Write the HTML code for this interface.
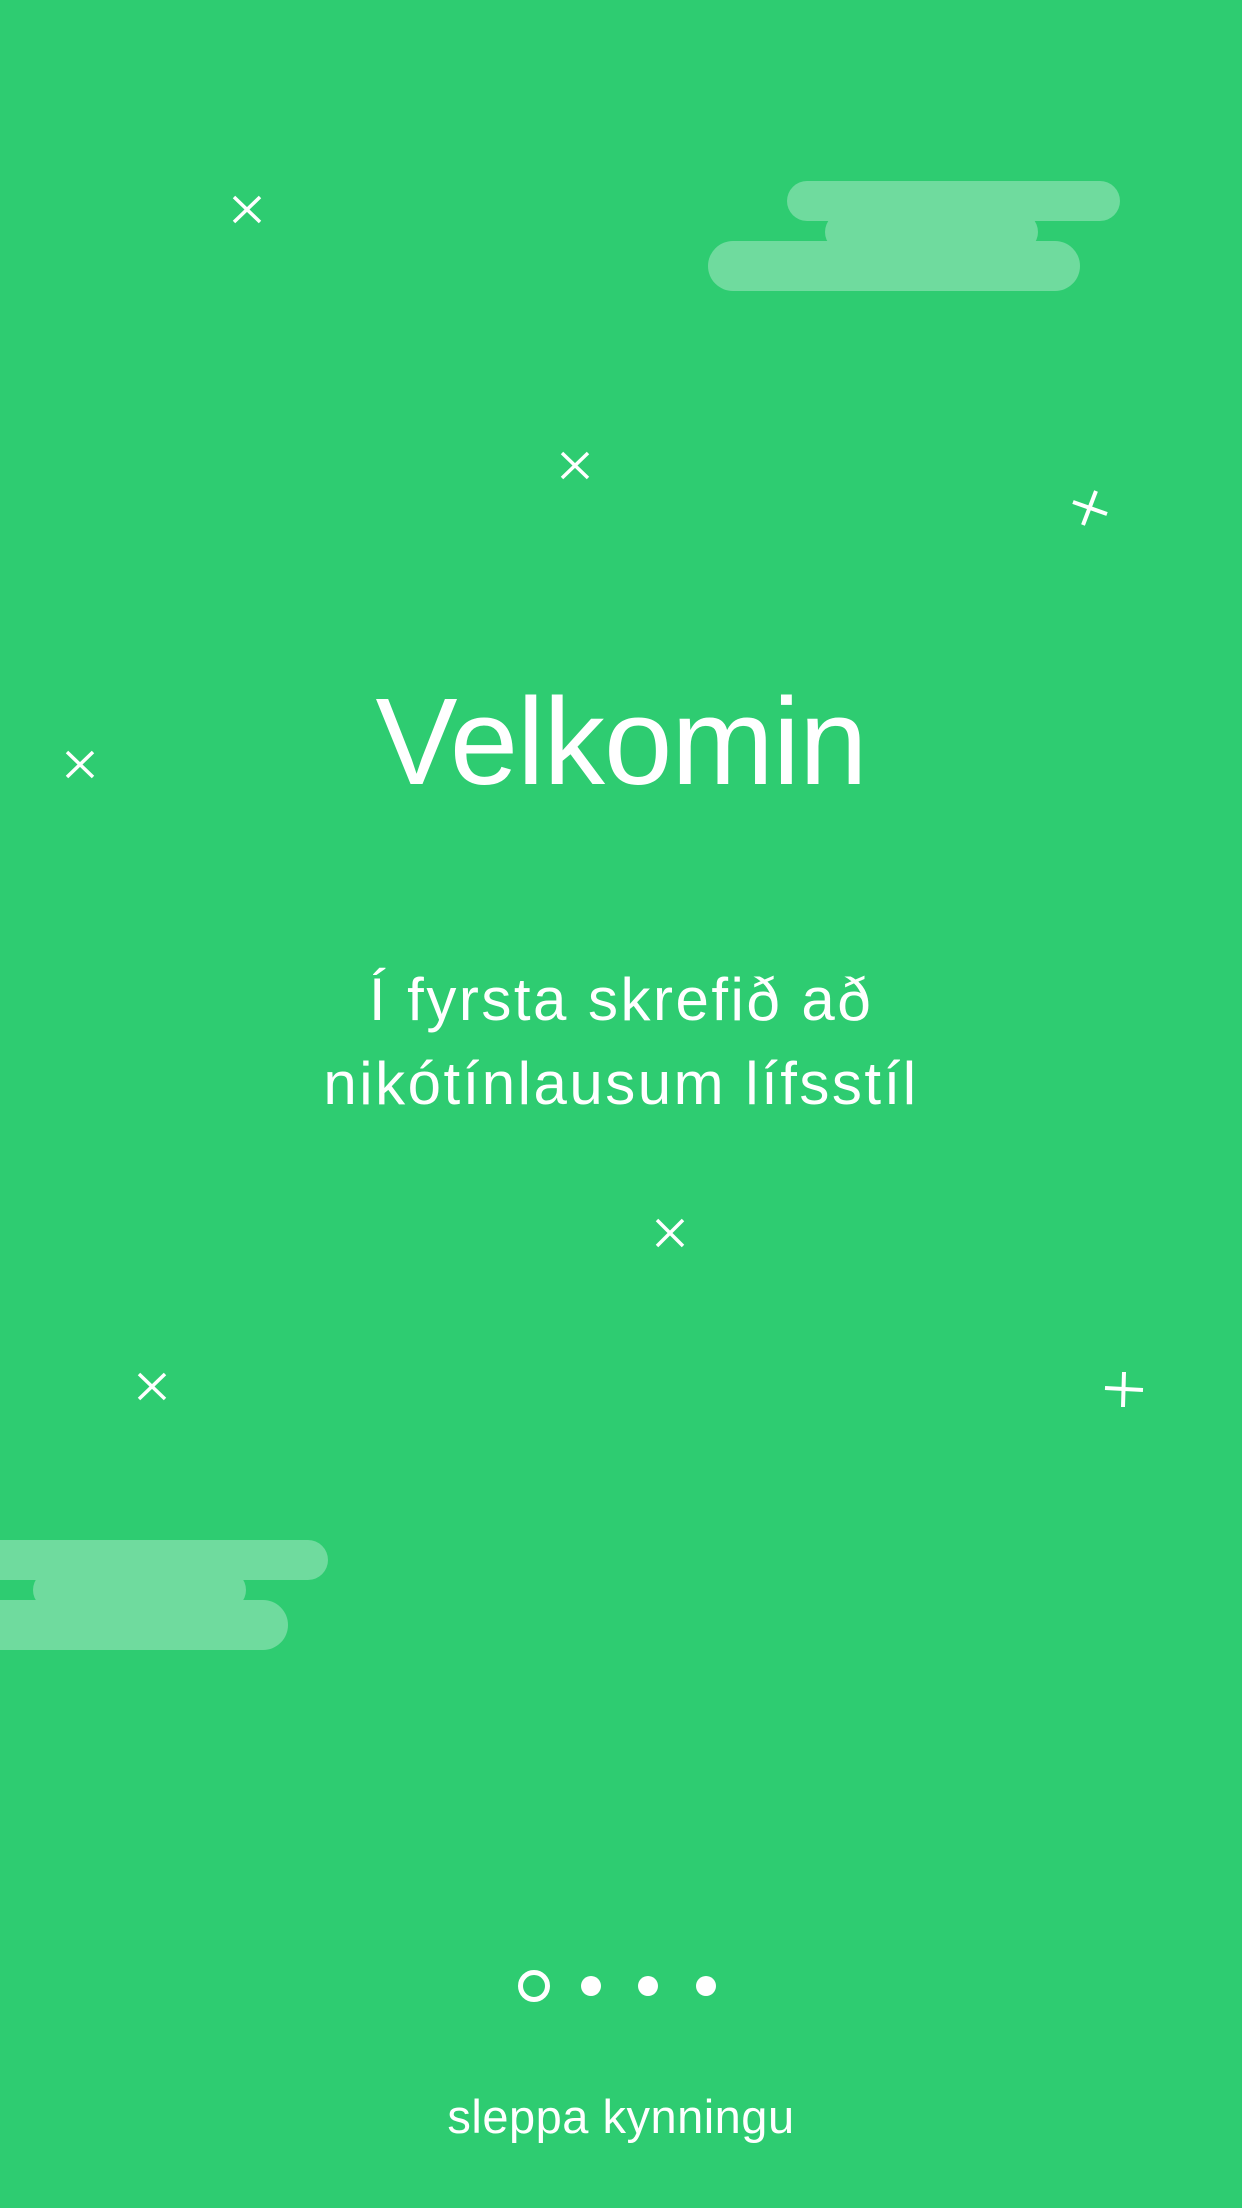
<!DOCTYPE html>
<html><head><meta charset="utf-8"><style>
html,body{margin:0;padding:0}
body{width:1242px;height:2208px;background:#2ecc71;position:relative;overflow:hidden;font-family:"Liberation Sans",sans-serif;color:#fff}
.p{position:absolute;background:#6fdb9e}
.t{position:absolute;left:0;width:1242px;text-align:center;white-space:nowrap}
</style></head><body>
<div class="p" style="left:825px;top:212px;width:213px;height:40px;border-radius:20px"></div>
<div class="p" style="left:787px;top:181px;width:333px;height:40px;border-radius:20px"></div>
<div class="p" style="left:708px;top:241px;width:372px;height:50px;border-radius:25px"></div>
<div class="p" style="left:33px;top:1570px;width:213px;height:40px;border-radius:20px"></div>
<div class="p" style="left:-20px;top:1540px;width:348px;height:40px;border-radius:20px"></div>
<div class="p" style="left:-30px;top:1600px;width:318px;height:50px;border-radius:25px"></div>
<svg width="1242" height="2208" style="position:absolute;left:0;top:0" stroke="#fff" stroke-width="3.5" fill="none">
<path d="M234 197L260 222M260 197L234 222"/>
<path d="M562 453L588 478M588 453L562 478"/>
<path d="M1073 502L1107 514M1096 491L1083 525" stroke-width="4"/>
<path d="M67 752L93 777M93 752L67 777"/>
<path d="M657 1220L683 1246M683 1220L657 1246"/>
<path d="M139 1374L165 1399M165 1374L139 1399"/>
<path d="M1105 1388L1143 1390M1124 1372L1123 1407" stroke-width="4"/>
<circle cx="534" cy="1986" r="13.5" stroke-width="5"/>
</svg>
<div class="t" style="top:673px;font-size:123px;line-height:140px;letter-spacing:-1px">Velkomin</div>
<div class="t" style="top:958px;font-size:60px;line-height:84px;letter-spacing:2.5px">Í fyrsta skrefið að<br>nikótínlausum lífsstíl</div>
<svg width="1242" height="2208" style="position:absolute;left:0;top:0" fill="#fff">
<circle cx="591" cy="1986" r="10"/><circle cx="648" cy="1986" r="10"/><circle cx="706" cy="1986" r="10"/>
</svg>
<div class="t" style="top:2089px;font-size:47px;line-height:56px;letter-spacing:0.5px">sleppa kynningu</div>
</body></html>
